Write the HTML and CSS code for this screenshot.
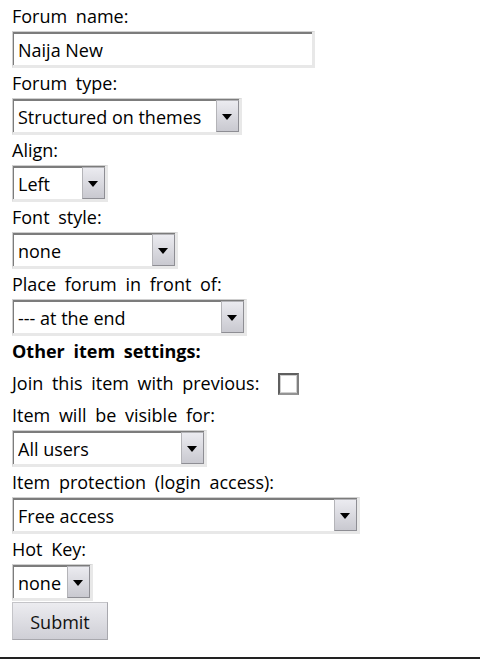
FILE: index.html
```html
<!DOCTYPE html>
<html lang="en">
<head>
  <meta charset="UTF-8" />
  <meta name="viewport" content="width=device-width, initial-scale=1.0"/>
  <title>Forum item settings</title>
  <link rel="stylesheet" href="styles.css">
</head>
<body>

  <form class="item-form" onsubmit="return false;">
    <label class="field-label" for="forumName">Forum name:</label>
    <input type="text" id="forumName" class="text-input" value="Naija New"/>

    <label class="field-label" for="forumType">Forum type:</label>
    <div class="select-box w-type">
      <select id="forumType">
        <option>Structured on themes</option>
        <option>Linear</option>
        <option>Chat</option>
      </select>
    </div>

    <label class="field-label" for="align">Align:</label>
    <div class="select-box w-align">
      <select id="align">
        <option>Left</option>
        <option>Center</option>
        <option>Right</option>
      </select>
    </div>

    <label class="field-label" for="fontStyle">Font style:</label>
    <div class="select-box w-font">
      <select id="fontStyle">
        <option>none</option>
        <option>bold</option>
        <option>italic</option>
      </select>
    </div>

    <label class="field-label" for="placeBefore">Place forum in front of:</label>
    <div class="select-box w-place">
      <select id="placeBefore">
        <option>--- at the end</option>
      </select>
    </div>

    <div class="field-label section-title">Other item settings:</div>

    <div class="check-row">
      <label for="joinPrev">Join this item with previous:</label>
      <input type="checkbox" id="joinPrev" class="check"/>
    </div>

    <label class="field-label" for="visibleFor">Item will be visible for:</label>
    <div class="select-box w-visible">
      <select id="visibleFor">
        <option>All users</option>
        <option>Registered users</option>
        <option>Guests only</option>
      </select>
    </div>

    <label class="field-label" for="protection">Item protection (login access):</label>
    <div class="select-box w-protect">
      <select id="protection">
        <option>Free access</option>
        <option>Login required</option>
      </select>
    </div>

    <label class="field-label" for="hotKey">Hot Key:</label>
    <div class="select-box w-hotkey">
      <select id="hotKey">
        <option>none</option>
        <option>1</option>
        <option>2</option>
        <option>3</option>
      </select>
    </div>

    <button type="submit" class="submit-btn">Submit</button>
  </form>

  <hr class="page-end"/>

</body>
</html>
```

FILE: styles.css
```css
body {
  margin: 0;
  font-family: "Open Sans", "DejaVu Sans", sans-serif;
  font-size: 18px;
  color: #000;
  background: #fff;
}

.item-form {
  padding: 1px 12px 0;
}

.field-label {
  display: block;
  height: 30px;
  line-height: 31px;
  word-spacing: 4px;
  white-space: nowrap;
}

.section-title {
  font-weight: bold;
}

.text-input,
.select-box select {
  font-family: inherit;
  font-size: 18px;
  color: #000;
  height: 37px;
  margin: 0;
  padding: 2px 0 0 5px;
  box-sizing: border-box;
  background: #fff;
  border-style: solid;
  border-width: 1px 3px 3px 1px;
  border-color: #cfcfcf #e8e8e8 #e8e8e8 #cfcfcf;
  border-radius: 0;
  box-shadow: inset 1px 2px 0 #7c7c7c;
  outline: none;
}

.text-input {
  display: block;
  width: 303px;
}

.select-box {
  position: relative;
  height: 37px;
}

.select-box select {
  -webkit-appearance: none;
  appearance: none;
  width: 100%;
}

/* the grey drop-down button */
.select-box::after {
  content: "";
  position: absolute;
  top: 2px;
  right: 3px;
  bottom: 3px;
  width: 23px;
  box-sizing: border-box;
  border: 1px solid #b4b4b8;
  border-right-color: #8e8e94;
  border-bottom-color: #8e8e94;
  background: linear-gradient(#ebebf0, #c9c9d0);
  pointer-events: none;
}

.select-box::before {
  content: "";
  position: absolute;
  top: 16px;
  right: 10px;
  z-index: 1;
  border-left: 5px solid transparent;
  border-right: 5px solid transparent;
  border-top: 6px solid #000;
  pointer-events: none;
}

.w-type { width: 230px; }
.w-align { width: 96px; }
.w-font { width: 166px; }
.w-place { width: 235px; }
.w-visible { width: 195px; }
.w-protect { width: 348px; }
.w-hotkey { width: 81px; }

.check-row {
  display: flex;
  align-items: center;
  height: 34px;
  word-spacing: 4px;
}

.check {
  -webkit-appearance: none;
  appearance: none;
  width: 21px;
  height: 22px;
  margin: 1px 0 0 19px;
  box-sizing: border-box;
  border: 2px solid #5f5f5f;
  border-bottom-color: #949494;
  border-right-color: #808080;
  background: #fff;
  box-shadow: inset 0 0 0 1px #cfcfcf;
}

.submit-btn {
  display: block;
  width: 96px;
  height: 38px;
  margin-top: 1px;
  padding-top: 3px;
  font-family: inherit;
  font-size: 18px;
  color: #111;
  border: 1px solid #c4c4c8;
  border-right-color: #a8a8ae;
  border-bottom-color: #a8a8ae;
  border-radius: 0;
  background: linear-gradient(#ececf0, #cfcfd6);
  cursor: pointer;
}

.page-end {
  margin: 17px 0 0;
  border: none;
  border-top: 2px solid #222;
}
```
